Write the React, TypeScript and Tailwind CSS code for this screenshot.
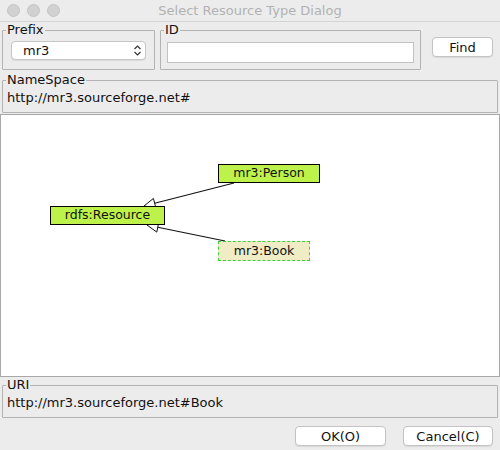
import React from 'react';

const ui = "font-['Lucida_Grande','DejaVu_Sans',sans-serif]";

function Group({ label, className, children }: { label: string; className?: string; children?: React.ReactNode }) {
  return (
    <fieldset className={`border border-[#b3b3b3] rounded-[1px] ${className ?? ''}`}>
      <legend className="ml-[3px] px-[1px] text-[13px] leading-[16px] text-[#111]">{label}</legend>
      {children}
    </fieldset>
  );
}

function Node({ label, x, y, w, h, book }: { label: string; x: number; y: number; w: number; h: number; book?: boolean }) {
  return (
    <div
      className={`absolute flex items-center justify-center text-[12.5px] text-[#111] font-['DejaVu_Sans',sans-serif] ${
        book ? 'bg-[#f0ecc6] border border-dashed border-[#3ad23a]' : 'bg-[#bdf24a] border border-black'
      }`}
      style={{ left: x, top: y, width: w, height: h }}
    >
      {label}
    </div>
  );
}

// hollow arrow head at (x2,y2)
function Edge({ x1, y1, x2, y2 }: { x1: number; y1: number; x2: number; y2: number }) {
  const dx = x2 - x1;
  const dy = y2 - y1;
  const len = Math.hypot(dx, dy);
  const ux = dx / len;
  const uy = dy / len;
  const L = 11;
  const W = 5;
  const bx = x2 - ux * L;
  const by = y2 - uy * L;
  const p1 = `${bx - uy * W},${by + ux * W}`;
  const p2 = `${bx + uy * W},${by - ux * W}`;
  return (
    <g>
      <line x1={x1} y1={y1} x2={bx} y2={by} stroke="#111" strokeWidth="1.1" />
      <polygon points={`${x2},${y2} ${p1} ${p2}`} fill="white" stroke="#111" strokeWidth="1" />
    </g>
  );
}

export default function App() {
  return (
    <div className={`w-[500px] h-[450px] bg-[#ececec] flex flex-col overflow-hidden ${ui}`}>
      {/* title bar */}
      <div className="relative h-[22px] shrink-0 border-b border-[#d4d4d4] bg-[#ececec] flex items-center">
        <div className="flex gap-[7px] pl-[7px]">
          <span className="w-[13px] h-[13px] rounded-full bg-[#d1d1d1] border border-[#c4c4c4]" />
          <span className="w-[13px] h-[13px] rounded-full bg-[#d1d1d1] border border-[#c4c4c4]" />
          <span className="w-[13px] h-[13px] rounded-full bg-[#d1d1d1] border border-[#c4c4c4]" />
        </div>
        <div className="absolute inset-0 flex items-center justify-center text-[13px] text-[#b2b2b2]">
          Select Resource Type Dialog
        </div>
      </div>

      {/* prefix / id / find */}
      <div className="flex items-start h-[48px] shrink-0">
        <Group label="Prefix" className="ml-[2px] w-[153px] h-[48px]">
          <div className="px-[8px] pt-[3px]">
            <div className="h-[19px] bg-white rounded-[4px] border border-[#c6c6c6] shadow-[0_1px_1px_rgba(0,0,0,0.08)] flex items-center pl-[11px] pr-[3px] text-[13px] text-[#111]">
              <span className="flex-1">mr3</span>
              <svg width="9" height="13" viewBox="0 0 9 13" fill="none" stroke="#333" strokeWidth="1.2">
                <polyline points="1.5,5 4.5,2 7.5,5" />
                <polyline points="1.5,8 4.5,11 7.5,8" />
              </svg>
            </div>
          </div>
        </Group>
        <Group label="ID" className="ml-[5px] w-[261px] h-[48px]">
          <div className="px-[6px] pt-[4px]">
            <div className="h-[21px] bg-white border border-[#c2c2c2]" />
          </div>
        </Group>
        <button className="ml-[11px] mt-[15px] w-[61px] h-[20px] bg-white rounded-[4px] border border-[#c3c3c3] shadow-[0_1px_1px_rgba(0,0,0,0.08)] text-[13px] text-[#111] leading-none">
          Find
        </button>
      </div>

      {/* namespace */}
      <Group label="NameSpace" className="mx-[2px] mt-[2px] h-[41px] shrink-0">
        <div className="pl-[4px] text-[13px] leading-[16px] text-[#111] pt-[2px]">http://mr3.sourceforge.net#</div>
      </Group>

      {/* canvas */}
      <div className="relative h-[263px] shrink-0 bg-white border border-[#a8a8a8] mt-[1px]">
        <svg className="absolute left-0 top-0" width="500" height="263">
          <Edge x1={233} y1={68} x2={143} y2={91} />
          <Edge x1={224} y1={126} x2={146} y2={110} />
        </svg>
        <Node label="mr3:Person" x={217} y={49} w={102} h={19} />
        <Node label="rdfs:Resource" x={49} y={91} w={115} h={19} />
        <Node label="mr3:Book" x={217} y={126} w={92} h={20} book />
      </div>

      {/* uri */}
      <Group label="URI" className="mx-[2px] h-[41px] shrink-0">
        <div className="pl-[4px] text-[13px] leading-[16px] text-[#111] pt-[2px]">http://mr3.sourceforge.net#Book</div>
      </Group>

      {/* buttons */}
      <div className="flex justify-end gap-[17px] pr-[7px] mt-[8px]">
        <button className="w-[91px] h-[20px] bg-white rounded-[4px] border border-[#c3c3c3] shadow-[0_1px_1px_rgba(0,0,0,0.08)] text-[13px] text-[#111] leading-none">
          OK(O)
        </button>
        <button className="w-[90px] h-[20px] bg-white rounded-[4px] border border-[#c3c3c3] shadow-[0_1px_1px_rgba(0,0,0,0.08)] text-[13px] text-[#111] leading-none">
          Cancel(C)
        </button>
      </div>
    </div>
  );
}
